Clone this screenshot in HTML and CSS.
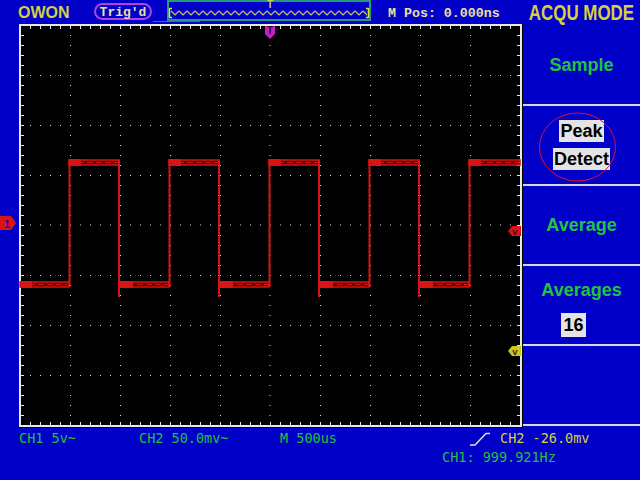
FILE: index.html
```html
<!DOCTYPE html>
<html lang="en">
<head>
  <meta charset="UTF-8" />
  <meta name="viewport" content="width=device-width, initial-scale=1" />
  <title>OWON - ACQU MODE</title>
  <link rel="stylesheet" href="styles.css">
</head>
<body>

<div class="scope">

  <!-- top bar -->
  <header class="topbar">
    <div class="logo">OWON</div>
    <div class="trig">Trig'd</div>
    <svg class="overview" viewBox="0 0 204 22" width="204" height="22" xmlns="http://www.w3.org/2000/svg">
      <defs>
        <pattern id="zz" x="4" y="9" width="8" height="8" patternUnits="userSpaceOnUse">
          <path d="M0 2L4 6L8 2" fill="none" stroke="#d0d050" stroke-width="1.2"/>
        </pattern>
      </defs>
      <rect x="1" y="1" width="202" height="19" fill="none" stroke="#1f9c78" stroke-width="2"/>
      <rect x="4" y="9" width="196" height="8" fill="url(#zz)"/>
      <path d="M2.5 8V18M2.5 8.5H5M2.5 17.5H5M201.5 8V18M201.5 8.5H199M201.5 17.5H199" fill="none" stroke="#e0e040" stroke-width="1.5"/>
      <text x="103" y="8" class="ov-t">T</text>
    </svg>
    <div class="mpos">M Pos: 0.000ns</div>
    <div class="title"><span>ACQU MODE</span></div>
  </header>

  <div class="middle">

    <div class="gutter">
      <svg class="ch1-mark" viewBox="0 0 17 15" width="17" height="15" xmlns="http://www.w3.org/2000/svg">
        <polygon points="0,0 11,0 16,7 11,14 0,14" fill="#d81414"/>
        <text x="7" y="11.5" class="mark-txt blue">1</text>
      </svg>
    </div>

    <!-- graticule, drawn in page coordinates -->
    <svg class="screen" viewBox="19 24 504 404" width="504" height="404" xmlns="http://www.w3.org/2000/svg">
      <rect x="19" y="24" width="504" height="404" fill="#000"/>

      <!-- edge ticks -->
      <g fill="none" stroke="#e8e8e8" stroke-dasharray="1 9">
        <path d="M30 27.5H520M30 423.5H520" stroke-width="3"/>
        <path d="M22.5 35V425M518.5 35V425" stroke-width="3"/>
      </g>

      <!-- dotted grid -->
      <path class="dots" d="M70.5 35V425M120.5 35V425M170.5 35V425M220.5 35V425M320.5 35V425M370.5 35V425M420.5 35V425M470.5 35V425M30 75.5H520M30 125.5H520M30 175.5H520M30 275.5H520M30 325.5H520M30 375.5H520"/>
      <path class="dots" d="M270 35V425M30 225H520" stroke-width="3"/>

      <!-- border -->
      <rect x="20" y="25" width="501" height="401" fill="none" stroke="#e8e8e8" stroke-width="2"/>

      <!-- CH1 trace -->
      <g class="band">
        <rect x="20" y="282" width="49" height="5"/>
        <rect x="119" y="282" width="50" height="5"/>
        <rect x="219" y="282" width="50" height="5"/>
        <rect x="319" y="282" width="50" height="5"/>
        <rect x="419" y="282" width="50" height="5"/>
        <rect x="69" y="160" width="50" height="5"/>
        <rect x="169" y="160" width="50" height="5"/>
        <rect x="269" y="160" width="50" height="5"/>
        <rect x="369" y="160" width="50" height="5"/>
        <rect x="469" y="160" width="51" height="5"/>
      </g>
      <path class="band-mid" d="M69 162.5H119M169 162.5H219M269 162.5H319M369 162.5H419M469 162.5H520M20 284.5H69M119 284.5H169M219 284.5H269M319 284.5H369M419 284.5H469"/>
      <g class="band-head">
        <rect x="20" y="281" width="12" height="7"/>
        <rect x="119" y="281" width="14" height="7"/>
        <rect x="219" y="281" width="14" height="7"/>
        <rect x="319" y="281" width="14" height="7"/>
        <rect x="419" y="281" width="14" height="7"/>
        <rect x="69" y="159" width="12" height="7"/>
        <rect x="169" y="159" width="12" height="7"/>
        <rect x="269" y="159" width="12" height="7"/>
        <rect x="369" y="159" width="12" height="7"/>
        <rect x="469" y="159" width="12" height="7"/>
      </g>
      <path class="edges" d="M69.5 287V159M169.5 287V159M269.5 287V159M369.5 287V159M469.5 287V159M119 160V297M219 160V297M319 160V297M419 160V297"/>

      <!-- markers -->
      <polygon points="265,26 275,26 275,34 270,39 265,34" fill="#c81ec8"/>
      <text x="270" y="34" class="mark-txt dark">T</text>

      <polygon points="508,231 512,226 521,226 521,236 512,236" fill="#d81414"/>
      <text x="515" y="234.5" class="mark-txt small dark">V</text>

      <polygon points="508,351 512,346 521,346 521,356 512,356" fill="#c8c820"/>
      <text x="515" y="354.5" class="mark-txt small dark">V</text>
    </svg>

    <aside class="menu">
      <div class="item"><span class="label">Sample</span></div>
      <div class="item selected">
        <span class="chip">Peak</span>
        <span class="chip">Detect</span>
        <svg class="ring" viewBox="0 0 117 80" width="117" height="80" xmlns="http://www.w3.org/2000/svg">
          <ellipse cx="54.5" cy="41" rx="38" ry="34" fill="none" stroke="#e01030" stroke-width="1"/>
        </svg>
      </div>
      <div class="item"><span class="label">Average</span></div>
      <div class="item count">
        <span class="label">Averages</span>
        <span class="chip num">16</span>
      </div>
      <div class="item"></div>
    </aside>

  </div>

  <!-- status line -->
  <footer class="status">
    <div class="status-row">
      <span>CH1 5v~</span>
      <span>CH2 50.0mv~</span>
      <span>M 500us</span>
      <svg class="slope" viewBox="0 0 20 14" width="20" height="14" xmlns="http://www.w3.org/2000/svg">
        <path d="M0 13H5L16 1.5H20" fill="none" stroke="#e0e0e0" stroke-width="1.5"/>
      </svg>
      <span class="yellow">CH2 -26.0mv</span>
    </div>
    <div class="freq">CH1: 999.921Hz</div>
  </footer>

</div>

</body>
</html>
```

FILE: styles.css
```css
body {
  margin: 0;
  width: 640px;
  height: 480px;
  overflow: hidden;
  background: #0000c8;
  font-family: "Liberation Sans", Arial, sans-serif;
}

.scope {
  display: flex;
  flex-direction: column;
  height: 480px;
}

/* top bar */
.topbar {
  position: relative;
  display: flex;
  align-items: flex-start;
  height: 24px;
  flex: none;
}

/* small magenta rule under the trigger pill */
.topbar::after {
  content: "";
  position: absolute;
  left: 153px;
  top: 21px;
  width: 47px;
  height: 1px;
  background: #8a3cc8;
}

.logo {
  margin: 4px 0 0 18px;
  width: 76px;
  font: bold 16px/17px "Liberation Sans", Arial, sans-serif;
  color: #d4d040;
}

.trig {
  margin-top: 3px;
  margin-right: 15px;
  width: 58px;
  height: 17px;
  box-sizing: border-box;
  padding-top: 1px;
  border: 2px solid #b040e0;
  border-radius: 9px;
  font: bold 13px/14px "Liberation Mono", monospace;
  color: #e8e0a0;
  text-align: center;
}

.overview {
  display: block;
  flex: none;
}

.ov-t {
  font: bold 10px "Liberation Sans", sans-serif;
  fill: #c8d050;
  text-anchor: middle;
}

.mpos {
  margin: 6px 0 0 17px;
  font: bold 13.3px/16px "Liberation Mono", monospace;
  color: #e8e0a0;
  white-space: nowrap;
}

.title {
  margin: 2px 0 0 auto;
  width: 117px;
  display: flex;
  justify-content: center;
  white-space: nowrap;
}

.title span {
  flex: none;
  font: bold 22px/22px "Liberation Sans", Arial, sans-serif;
  color: #d8d040;
  transform: scaleX(0.77);
}

/* middle row */
.middle {
  display: flex;
  height: 404px;
  flex: none;
}

.gutter {
  position: relative;
  width: 19px;
  flex: none;
}

.ch1-mark {
  position: absolute;
  left: 0;
  top: 192px;
}

.screen {
  display: block;
  flex: none;
}

.dots {
  fill: none;
  stroke: #d8d8d8;
  stroke-width: 1;
  stroke-dasharray: 1 9;
}

.band rect {
  fill: #5a0000;
  stroke: #d81414;
  stroke-width: 1.5;
}

.band-mid {
  fill: none;
  stroke: #d81414;
  stroke-width: 1;
  stroke-dasharray: 6 3;
}

.band-head rect {
  fill: #d81414;
}

.edges {
  fill: none;
  stroke: #d81414;
  stroke-width: 2;
}

.mark-txt {
  font: bold 10px "Liberation Sans", sans-serif;
  text-anchor: middle;
}

.mark-txt.small {
  font-size: 8px;
}

.mark-txt.dark {
  fill: #3a0010;
}

.mark-txt.blue {
  fill: #0000c8;
}

/* right menu */
.menu {
  width: 117px;
  padding-top: 2px;
  flex: none;
}

.item {
  position: relative;
  height: 80px;
  box-sizing: border-box;
  border-bottom: 2px solid #d8d8d8;
  display: flex;
  flex-direction: column;
  align-items: center;
  justify-content: center;
}

.label {
  font: bold 18px/22px "Liberation Sans", Arial, sans-serif;
  color: #20c440;
}

.chip {
  background: #e4e4e4;
  color: #000;
  font: bold 18px/22px "Liberation Sans", Arial, sans-serif;
  padding: 0 1px;
}

.selected {
  gap: 6px;
}

.ring {
  position: absolute;
  left: 0;
  top: 0;
  pointer-events: none;
}

.count {
  justify-content: flex-start;
  padding-top: 13px;
  gap: 12px;
}

.num {
  margin-right: 16px;
  line-height: 24px;
  padding: 0 2px;
}

/* status line */
.status {
  flex: 1;
  padding: 1px 0 0 19px;
  font: 13.5px/19px "DejaVu Sans Mono", monospace;
  color: #20c040;
  white-space: nowrap;
}

.status-row {
  display: grid;
  grid-template-columns: 120px 141px 190px 30px auto;
  align-items: center;
}

.slope {
  display: block;
}

.yellow {
  color: #d8d040;
}

.freq {
  padding-left: 423px;
}
```
